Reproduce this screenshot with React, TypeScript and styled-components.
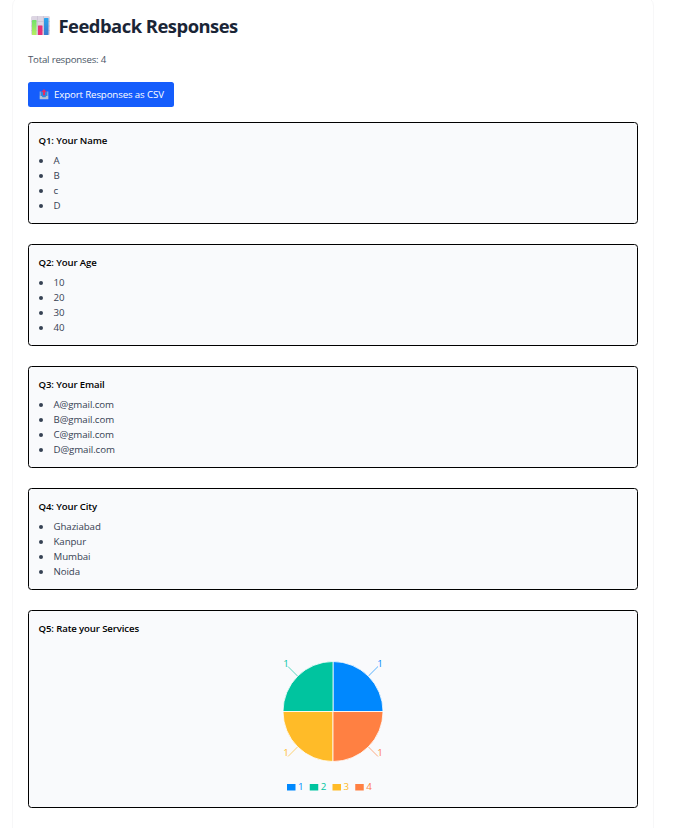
import React from "react";
import styled, { createGlobalStyle } from "styled-components";

const GlobalStyle = createGlobalStyle`
  * { box-sizing: border-box; }
  body {
    margin: 0;
    height: 828px;
    overflow: hidden;
    background: #fff;
    font-family: "Segoe UI", "Open Sans", "Noto Sans", sans-serif;
    font-size: 9.7px;
    line-height: 15px;
  }
`;

const Panel = styled.main`
  width: 642px;
  height: 860px;
  margin: -4px 0 0 12px;
  padding: 16px 15px 0;
  border: 1px solid #f7f7f8;
  border-radius: 10px;
  background: #fff;
`;

const Heading = styled.h1`
  display: flex;
  align-items: center;
  height: 25px;
  margin: 0;
  padding-left: 3px;
  gap: 8.5px;
  color: #1a2536;
  font-size: 18.4px;
  font-weight: 700;
  line-height: 25px;
  letter-spacing: -0.5px;
  white-space: nowrap;
`;

const Total = styled.p`
  margin: 14px 0 15px;
  color: #4a5565;
  letter-spacing: -0.22px;
`;

const ExportButton = styled.button`
  display: flex;
  align-items: center;
  width: 146px;
  height: 25px;
  margin: 0 0 15px;
  padding: 0 0 0 11px;
  gap: 5px;
  border: 0;
  border-radius: 2.5px;
  background: #155dfc;
  color: #fff;
  font: inherit;
  font-weight: 500;
  letter-spacing: -0.13px;
  white-space: nowrap;
`;

const Cards = styled.div`
  display: flex;
  flex-direction: column;
  gap: 20px;
`;

const Card = styled.section`
  padding: 10px 10px 10px 9.5px;
  border: 1px solid #000;
  border-radius: 3.5px;
  background: #f9fafc;
`;

const Question = styled.h2`
  margin: 0 0 5px;
  color: #000;
  font-size: 9.6px;
  font-weight: 600;
  line-height: 15px;
  letter-spacing: -0.12px;
`;

const Answers = styled.ul`
  margin: 0;
  padding: 0;
  list-style: none;
  color: #364153;
  letter-spacing: -0.08px;
`;

const Answer = styled.li`
  display: flex;
  align-items: center;
  gap: 11px;
  height: 15px;

  &::before {
    content: "";
    width: 4px;
    height: 4px;
    border-radius: 50%;
    background: #364153;
  }
`;

const ChartArea = styled.div`
  display: flex;
  justify-content: center;
  height: 156px;
`;

const questions = [
  { title: "Q1: Your Name", answers: ["A", "B", "c", "D"] },
  { title: "Q2: Your Age", answers: ["10", "20", "30", "40"] },
  { title: "Q3: Your Email", answers: ["A@gmail.com", "B@gmail.com", "C@gmail.com", "D@gmail.com"] },
  { title: "Q4: Your City", answers: ["Ghaziabad", "Kanpur", "Mumbai", "Noida"] },
];

const slices = [
  { color: "#0088fe", d: "M100 70.5V20.5A50 50 0 0 1 150 70.5Z", line: "M135.4 35.1L145 25.5", x: 147, y: 26 },
  { color: "#00c49f", d: "M100 70.5H50A50 50 0 0 1 100 20.5Z", line: "M64.6 35.1L55 25.5", x: 53, y: 26 },
  { color: "#ffbb28", d: "M100 70.5V120.5A50 50 0 0 1 50 70.5Z", line: "M64.6 105.9L55 115.5", x: 53, y: 115 },
  { color: "#ff8042", d: "M100 70.5H150A50 50 0 0 1 100 120.5Z", line: "M135.4 105.9L145 115.5", x: 147, y: 115 },
];

const BarChartIcon = () => (
  <svg width="19" height="19" viewBox="0 0 19 19" aria-hidden="true">
    <defs>
      <linearGradient id="green" x2="0" y2="1"><stop stopColor="#72e06b" /><stop offset="1" stopColor="#b5ef62" /></linearGradient>
      <linearGradient id="blue" x2="0" y2="1"><stop stopColor="#2aa5ee" /><stop offset="1" stopColor="#3979cf" /></linearGradient>
    </defs>
    <rect width="19" height="19" rx="1.5" fill="#ddd6e3" />
    <path d="M0 5.5H19M0 10H19M0 14.5H19M6.5 0V19M12.5 0V19" stroke="#c8bfd1" strokeWidth=".7" />
    <rect x="1" y="4" width="4.5" height="15" rx=".6" fill="url(#green)" />
    <rect x="7" y="9.5" width="4.5" height="9.5" rx=".6" fill="#e72f78" />
    <rect x="13" y="2" width="4.5" height="17" rx=".6" fill="url(#blue)" />
  </svg>
);

const OutboxIcon = () => (
  <svg width="10" height="11" viewBox="0 0 10 11" aria-hidden="true">
    <path d="M1.5 2.5H8.5L9.3 7V10H.7V7Z" fill="#3188df" />
    <path d="M1.2 2.5V7M8.8 2.5V7" stroke="#a9bad5" strokeWidth=".9" />
    <path d="M.7 7H2.8L3.5 8.3H6.5L7.2 7H9.3V10.2H.7Z" fill="#b7c3d5" />
    <path d="M5 0L7.6 3H6V6.2H4V3H2.4Z" fill="#e52d65" />
  </svg>
);

const PieChart = () => (
  <svg width="200" height="156" viewBox="0 0 200 156" fontSize="9.8">
    {slices.map((s) => (
      <g key={s.color}>
        <path d={s.line} stroke={s.color} fill="none" opacity=".65" />
        <path d={s.d} fill={s.color} stroke="#fff" strokeWidth=".8" />
        <text x={s.x} y={s.y} textAnchor="middle" fill={s.color}>1</text>
      </g>
    ))}
    {slices.map((s, i) => (
      <g key={s.color} fill={s.color}>
        <rect x={54 + i * 22.75} y="143" width="8.5" height="6.5" />
        <text x={65 + i * 22.75} y="149">{i + 1}</text>
      </g>
    ))}
  </svg>
);

export default function App() {
  return (
    <>
      <GlobalStyle />
      <Panel>
        <Heading><BarChartIcon /><span>Feedback Responses</span></Heading>
        <Total>Total responses: 4</Total>
        <ExportButton><OutboxIcon />Export Responses as CSV</ExportButton>
        <Cards>
          {questions.map((q) => (
            <Card key={q.title}>
              <Question>{q.title}</Question>
              <Answers>{q.answers.map((a) => <Answer key={a}>{a}</Answer>)}</Answers>
            </Card>
          ))}
          <Card>
            <Question>Q5: Rate your Services</Question>
            <ChartArea><PieChart /></ChartArea>
          </Card>
        </Cards>
      </Panel>
    </>
  );
}
